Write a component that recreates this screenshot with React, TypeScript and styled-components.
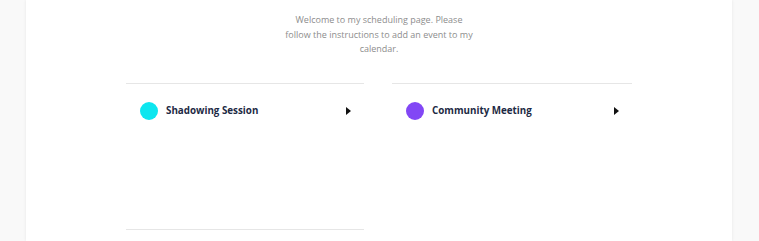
import React from "react";
import styled, { createGlobalStyle } from "styled-components";

const Global = createGlobalStyle`
  html, body { margin: 0; padding: 0; background: #f9f9f9; }
  body { font-family: "Open Sans", Lato, sans-serif; overflow: hidden; }
`;

const Page = styled.div`
  display: flex;
  justify-content: center;
  height: 241px;
  overflow: hidden;
  padding-left: 26px;
  padding-right: 27px;
`;

const Card = styled.main`
  flex: 1;
  background: #ffffff;
  box-shadow: 0 0 3px rgba(0, 0, 0, 0.08);
  display: flex;
  flex-direction: column;
  align-items: center;
  padding-top: 13px;
`;

const Intro = styled.p`
  margin: 0;
  width: 192px;
  text-align: center;
  font-size: 9px;
  line-height: 14.5px;
  color: #8d8d8d;
`;

const Grid = styled.div`
  margin-top: 26px;
  display: grid;
  grid-template-columns: 238px 240px;
  grid-auto-rows: 146px;
  column-gap: 28px;
`;

const Item = styled.div`
  border-top: 1px solid #e6e6e6;
  display: flex;
  align-items: flex-start;
  padding: 18px 13px 0 14px;
`;

const Row = styled.div`
  display: flex;
  align-items: center;
  height: 18px;
  flex: 1;
`;

const Dot = styled.span<{ $color: string }>`
  width: 18px;
  height: 18px;
  border-radius: 50%;
  background: ${(p) => p.$color};
  flex: none;
`;

const Name = styled.span`
  margin-left: 8px;
  flex: 1;
  font-size: 9.8px;
  font-weight: 700;
  color: #1d2a44;
`;

const Arrow = styled.span`
  width: 0;
  height: 0;
  border-top: 4.5px solid transparent;
  border-bottom: 4.5px solid transparent;
  border-left: 5px solid #111111;
`;

const events = [
  { name: "Shadowing Session", color: "#0de6ef" },
  { name: "Community Meeting", color: "#8247f5" },
];

export default function App() {
  return (
    <>
      <Global />
      <Page>
        <Card>
          <Intro>
            Welcome to my scheduling page. Please follow the instructions to add an event to my
            calendar.
          </Intro>
          <Grid>
            {events.map((e) => (
              <Item key={e.name}>
                <Row>
                  <Dot $color={e.color} />
                  <Name>{e.name}</Name>
                  <Arrow />
                </Row>
              </Item>
            ))}
            <Item />
          </Grid>
        </Card>
      </Page>
    </>
  );
}
